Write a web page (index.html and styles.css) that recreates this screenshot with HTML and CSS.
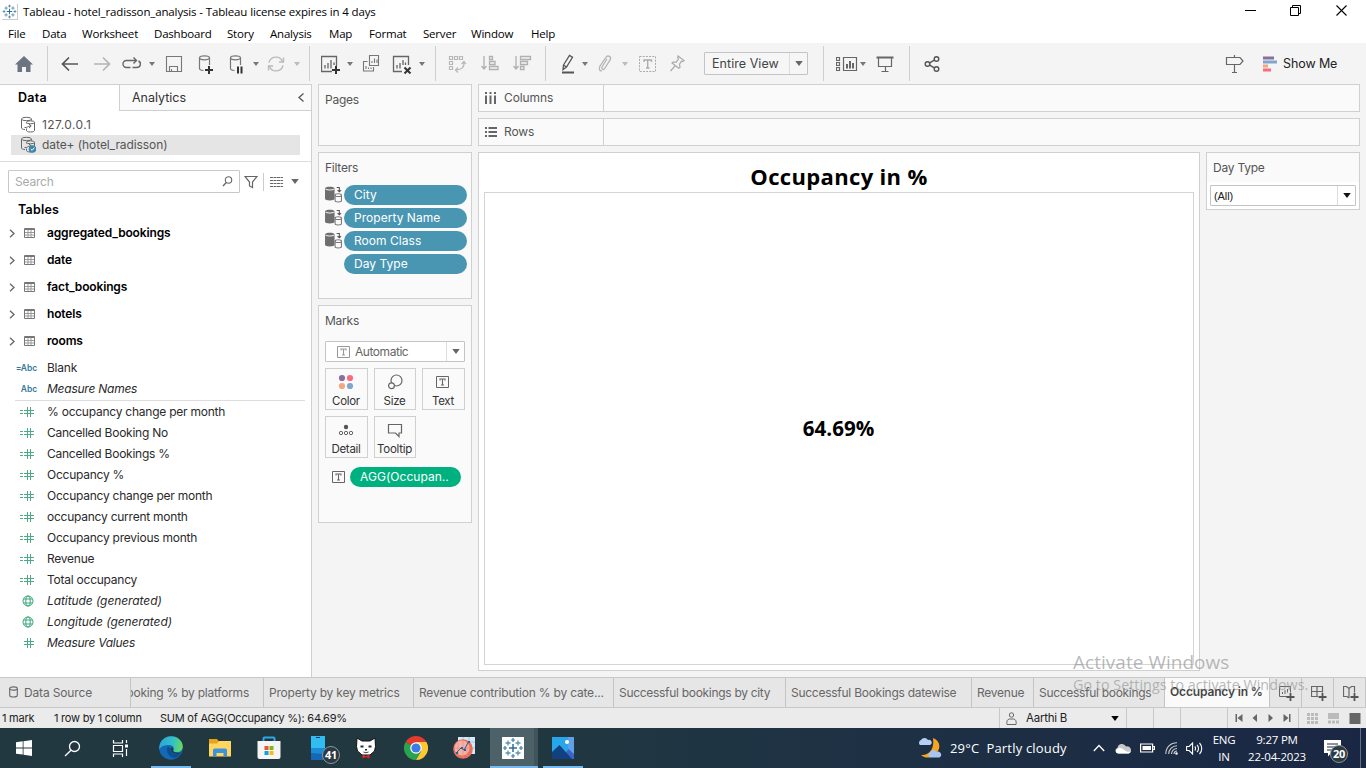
FILE: index.html
```html
<!DOCTYPE html>
<html lang="en">
<head>
<meta charset="utf-8">
<title>Tableau - hotel_radisson_analysis</title>
<link rel="stylesheet" href="styles.css">
</head>
<body>
<svg class="defs" aria-hidden="true">
  <symbol id="caret" viewBox="0 0 6 4"><path d="M0 0h6L3 4z" fill="currentColor"/></symbol>
  <symbol id="logo" viewBox="0 0 22 22"><g fill="none"><path d="M11 7v8M7 11h8" stroke="#2d6f9c" stroke-width="1.500"/><path d="M6 3.500v5M3.500 6h5M16 3.500v5M13.500 6h5M6 13.500v5M3.500 16h5M16 13.500v5M13.500 16h5" stroke="#5b93b3" stroke-width="1.300"/><path d="M11 1v4M9 3h4M11 17v4M9 19h4M3 9v4M1 11h4M19 9v4M17 11h4" stroke="#3c7ea8" stroke-width="1.200"/></g></symbol>
  <symbol id="chev" viewBox="0 0 6 9"><path d="M1 .8l4 3.700-4 3.700" fill="none" stroke="#666" stroke-width="1.300"/></symbol>
  <symbol id="table" viewBox="0 0 11 10"><path d="M.5.500h10v9H.5zM.5 1.500h10" fill="none" stroke="#777"/><path d="M1 4.500h9M1 7h9M4 2v7M7 2v7" fill="none" stroke="#999"/></symbol>
  <symbol id="hash" viewBox="0 0 10 10"><path d="M3.500 0v10M6.500 0v10M0 3.500h10M0 6.500h10" fill="none" stroke="#4bab85"/></symbol>
  <symbol id="ehash" viewBox="0 0 14 10"><path d="M7.500 0v10M10.500 0v10M4 3.500h10M4 6.500h10M0 3.500h3M0 6.500h3" fill="none" stroke="#4bab85"/></symbol>
  <symbol id="globe" viewBox="0 0 12 12"><g fill="none" stroke="#3aa77c"><circle cx="6" cy="6" r="5"/><ellipse cx="6" cy="6" rx="2.200" ry="5"/><path d="M1.500 4h9M1.500 8h9"/></g></symbol>
  <symbol id="db" viewBox="0 0 16 18"><g fill="none" stroke="#666"><path d="M5 13.500C3 13.500 1.500 12.800 1.500 12V3.200M11.500 4.500V3.200"/><ellipse cx="6.500" cy="3" rx="5" ry="1.700"/><path d="M6.500 7.500V6.500M6.500 12.500v2c0 .8 1.500 1.500 4 1.500s4-.7 4-1.500V6.500"/><ellipse cx="10.500" cy="6.300" rx="4" ry="1.500"/><path d="M4.500 11.500c3 .5 3-1.500 6-1.500M9 8l2.200 2L9 12"/></g></symbol>
  <symbol id="ctx" viewBox="0 0 16 17"><path d="M0 2.500C0 1.300 2 .7 4.500.7S9 1.300 9 2.500V12c0 1-2 1.600-4.500 1.600S0 13 0 12z" fill="#6e6e6e"/><path d="M.5 3c1.500 1 6.500 1 8 0" stroke="#eee" fill="none"/><path d="M9.500 9v5c0 1.400 6 1.400 6 0V9" fill="#fafafa" stroke="#777"/><ellipse cx="12.500" cy="8.700" rx="3" ry="1.300" fill="#fff" stroke="#777"/><path d="M11 1.500h2.500V5M11.800 3.800l1.700 1.700 1.700-1.700" fill="none" stroke="#555"/></symbol>
  <symbol id="tbox" viewBox="0 0 14 12"><path d="M.5.5h12v11H.5z" fill="none" stroke="currentColor"/><path d="M4 4.500V3h5v1.500M6.500 3v6M5 9h3" fill="none" stroke="currentColor" stroke-width="1.100"/></symbol>
</svg>

<header class="titlebar">
  <svg class="app-logo" viewBox="0 0 22 22"><use href="#logo"/></svg>
  <span class="title-text">Tableau - hotel_radisson_analysis - Tableau license expires in 4 days</span>
  <div class="winbtns">
    <svg width="11" height="11"><path d="M0 5.500h11" stroke="#000"/></svg>
    <svg width="11" height="11"><path d="M.5 2.500h8v8h-8zM2.500 2.500v-2h8v8h-2" fill="none" stroke="#000"/></svg>
    <svg width="11" height="11"><path d="M.5.5l10 10M10.500.5l-10 10" stroke="#000" stroke-width="1.100"/></svg>
  </div>
</header>
<nav class="menubar"><span class="w37">File</span><span class="w40">Data</span><span class="w72">Worksheet</span><span class="w73">Dashboard</span><span class="w43">Story</span><span class="w59">Analysis</span><span class="w40">Map</span><span class="w54">Format</span><span class="w48">Server</span><span class="w60">Window</span><span>Help</span></nav>

<div class="toolbar">
  <svg class="ic m14" viewBox="0 0 20 20"><path d="M10 2L1 10.500h2.500V18H8v-5h4v5h4.500v-7.500H19z" fill="#6b7480"/></svg>
  <i class="sep m13"></i>
  <svg class="ic m12" viewBox="0 0 20 20"><path d="M2.500 10H18M9 3.500L2.500 10 9 16.500" fill="none" stroke="#555" stroke-width="1.700"/></svg>
  <svg class="ic m12" viewBox="0 0 20 20"><path d="M2 10h15.500M11 3.500l6.500 6.500-6.500 6.500" fill="none" stroke="#b4b4b4" stroke-width="1.700"/></svg>
  <svg class="ic m10" viewBox="0 0 20 20"><path d="M8.500 13.500H4.500a3.500 3.500 0 0 1 0-7H14M10.500 13.500h4c4.500 0 5-5 2-6.500M11.500 3.500l3 3-3 3" fill="none" stroke="#666" stroke-width="1.400"/></svg>
  <svg class="caret m7"><use href="#caret"/></svg>
  <svg class="ic m9" viewBox="0 0 20 20"><path d="M2.500 2.500h15v15h-15zM5.500 17v-4.500h8V17M7.500 15v2" fill="none" stroke="#777" stroke-width="1.100"/></svg>
  <svg class="ic m12" viewBox="0 0 20 20"><g fill="none" stroke="#777" stroke-width="1.200"><ellipse cx="8.500" cy="3.800" rx="5" ry="2"/><path d="M3.500 4v10.500c0 1 2 1.800 4 2M13.500 4v7"/></g><path d="M13 12v8M9 16h8" stroke="#333" stroke-width="2"/></svg>
  <svg class="ic m11" viewBox="0 0 20 20"><g fill="none" stroke="#777" stroke-width="1.200"><ellipse cx="8.500" cy="3.800" rx="5" ry="2"/><path d="M3.500 4v10.500c0 1 2 1.800 4 2M13.500 4v7"/></g><path d="M11 12.500v7M14.500 12.500v7" stroke="#333" stroke-width="2"/></svg>
  <svg class="caret m6"><use href="#caret"/></svg>
  <svg class="ic m7" viewBox="0 0 20 20"><path d="M3 8.500C4.500 2 14 1 16.500 7.500M17 11.500C15.500 18 6 19 3.500 12.500M17.500 3.500v4.500h-4.500M2.500 16.500V12H7" fill="none" stroke="#bbb" stroke-width="1.400"/></svg>
  <svg class="caret m8 off"><use href="#caret"/></svg>
  <i class="sep m9"></i>
  <svg class="ic m11" viewBox="0 0 20 20"><path d="M11 17.500H.5v-15h15V12M4 11v3.500M7 9v5.500M10 6v8.500M13 8.500V11" fill="none" stroke="#666" stroke-width="1.300"/><path d="M15 12v8M11 16h8" stroke="#333" stroke-width="2"/></svg>
  <svg class="caret m6"><use href="#caret"/></svg>
  <svg class="ic m8" viewBox="0 0 20 20"><path d="M8.500 1.500h9v10h-9zM6.500 7.500h-4V17h10v-4M11 9V7M13.500 9V4.500M16 9V5.500M5 15v-3M7.500 15v-1.500M10 15v-1.500" fill="none" stroke="#777" stroke-width="1.100"/></svg>
  <svg class="ic m11" viewBox="0 0 20 20"><path d="M10 17.500H1.500v-15h15V11M5 11v3.500M8 9v5.500M11 6v5M13.500 8.500V11" fill="none" stroke="#666" stroke-width="1.300"/><path d="M12.500 13.500l6 6M18.500 13.500l-6 6" stroke="#333" stroke-width="2"/></svg>
  <svg class="caret m7"><use href="#caret"/></svg>
  <i class="sep m10"></i>
  <svg class="ic m11" viewBox="0 0 20 20"><path d="M2.500 2.500h3v3h-3zM7.500 2.500h3v3h-3zM12.500 2.500h3v3h-3zM2.500 7.500h3v3h-3zM2.500 12.500h3v3h-3zM17 8.500c.5 5-3 7.500-8.500 7.500M14.500 10L17 7.500l2 2.500M11 13.500L8.500 16l2.500 2.500" fill="none" stroke="#b8b8b8" stroke-width="1.200"/></svg>
  <svg class="ic m13" viewBox="0 0 20 20"><path d="M4 2v13M1.500 12L4 15l2.500-3M9.500 2.500h3v3h-3zM9.500 7.500H15v3H9.500zM9.500 12.500h8.500v3H9.500z" fill="none" stroke="#b0b0b0" stroke-width="1.300"/></svg>
  <svg class="ic m12" viewBox="0 0 20 20"><path d="M4 2v13M1.500 12L4 15l2.500-3M8.500 2.500h10v3h-10zM8.500 7.500h7v3h-7zM8.500 12.500H12v3H8.500z" fill="none" stroke="#b0b0b0" stroke-width="1.300"/></svg>
  <i class="sep m13"></i>
  <svg class="ic m12" viewBox="0 0 20 20"><path d="M5.500 11l6-9.500 3 1.800-6 9.700-3.500 2.500zM5.500 11l3 2" fill="none" stroke="#555" stroke-width="1.300"/><path d="M4 18.500h12" stroke="#555" stroke-width="2"/></svg>
  <svg class="caret m4"><use href="#caret"/></svg>
  <svg class="ic m7" viewBox="0 0 20 20"><path d="M12 5l-5 8c-1 2 1.500 3.500 2.700 1.500l5.500-8.800c1.600-3-2.400-5.200-4.200-2.300L5 12c-2 4 .5 5.500 2 4.500" fill="none" stroke="#b4b4b4" stroke-width="1.300"/></svg>
  <svg class="caret m7 off"><use href="#caret"/></svg>
  <svg class="ic m10" viewBox="0 0 20 20"><path d="M1.500 2.500h16v15h-16z" fill="none" stroke="#aaa" stroke-dasharray="2 1.200"/><path d="M6 8V6h7.500v2M9.700 6v8M8 14h3.500" fill="none" stroke="#aaa" stroke-width="1.300"/></svg>
  <svg class="ic m9" viewBox="0 0 20 20"><path d="M11 2l6 4.500-1.200 1-1.300-.3-2 3 .5 3.300-1.200.8L5 9l1-1 3.200.2L11.500 5l-.8-1.500zM8 12l-4.500 5" fill="none" stroke="#aaa" stroke-width="1.200"/></svg>
  <div class="select fit m17"><span>Entire View</span><b><svg class="caret big"><use href="#caret"/></svg></b></div>
  <i class="sep m15"></i>
  <svg class="ic22 m12" viewBox="0 0 22 20"><path d="M7.500 3.500h13v13h-13zM.5 3.500h3v3h-3zM.5 8.500h3v3h-3zM.5 13.500h3v3h-3z" fill="none" stroke="#666" stroke-width="1.200"/><path d="M11 10v4.500M14 7v7.500M17 9v5.500" stroke="#666" stroke-width="2"/></svg>
  <svg class="caret m2"><use href="#caret"/></svg>
  <svg class="ic m9" viewBox="0 0 20 20"><path d="M1.500 3.500h17" stroke="#666" stroke-width="2"/><path d="M3.500 4v8.500h13V4M10.500 12.500v5M6.500 17.500h7" fill="none" stroke="#666" stroke-width="1.200"/></svg>
  <i class="sep m14"></i>
  <svg class="ic m12" viewBox="0 0 20 20"><g fill="none" stroke="#555" stroke-width="1.400"><circle cx="5.500" cy="10" r="2.300"/><circle cx="14.500" cy="5" r="2.300"/><circle cx="14.500" cy="15" r="2.300"/><path d="M7.700 8.800l4.600-2.600M7.700 11.200l4.600 2.600"/></g></svg>
  <svg class="ic guide" viewBox="0 0 20 20"><path d="M2.500 3.500H16l3 3.500-3 3.500H2.500zM10.500 1v2M10.500 10.500v8M8 18.500h5" fill="none" stroke="#666" stroke-width="1.200"/></svg>
  <svg class="showme-ic m18" width="16" height="16"><path d="M1 .5h11v3H1z" fill="#8a6f9a"/><path d="M1 4.500h14v3H1z" fill="#7fa6cc"/><path d="M1 8.500h5v3H1z" fill="#f4a77f"/><path d="M1 12.500h8v3H1z" fill="#fb6a80"/></svg>
  <span class="showme">Show Me</span>
</div>

<main class="workspace">
  <aside class="datapane">
    <div class="ptabs"><span class="ptab on">Data</span><span class="ptab">Analytics</span><svg width="6" height="9" viewBox="0 0 6 9"><path d="M5.500.5L1 4.500l4.500 4" fill="none" stroke="#555" stroke-width="1.300"/></svg></div>
    <div class="sources">
      <div class="src ls1"><svg class="dbi"><use href="#db"/></svg>127.0.0.1</div>
      <div class="src sel"><svg class="dbi" viewBox="0 0 16 18"><use href="#db" width="16" height="18"/><circle cx="12.500" cy="13" r="3.800" fill="#3a86a8"/><path d="M10.700 13l1.400 1.400 2.300-2.800" fill="none" stroke="#fff"/></svg>date+ (hotel_radisson)</div>
    </div>
    <div class="searchrow">
      <div class="search"><span>Search</span><svg width="11" height="11"><circle cx="6.500" cy="4" r="3.200" fill="none" stroke="#666" stroke-width="1.100"/><path d="M4.300 6.500L1 10" stroke="#666" stroke-width="1.300"/></svg></div>
      <svg class="funnel" width="14" height="14"><path d="M1 1.500h12L8.500 7v5.500l-3-1.500V7z" fill="none" stroke="#666" stroke-width="1.200"/></svg>
      <i class="vbar"></i>
      <svg class="lines" width="13" height="10"><path d="M0 .5h13M0 3.500h13M0 6.500h13M0 9.500h13" stroke="#666" stroke-dasharray="3 .5"/></svg>
      <svg class="caret big"><use href="#caret"/></svg>
    </div>
    <h2>Tables</h2>
    <ul class="tables">
      <li><svg class="ch"><use href="#chev"/></svg><svg class="tb"><use href="#table"/></svg>aggregated_bookings</li>
      <li><svg class="ch"><use href="#chev"/></svg><svg class="tb"><use href="#table"/></svg>date</li>
      <li><svg class="ch"><use href="#chev"/></svg><svg class="tb"><use href="#table"/></svg>fact_bookings</li>
      <li><svg class="ch"><use href="#chev"/></svg><svg class="tb"><use href="#table"/></svg>hotels</li>
      <li><svg class="ch"><use href="#chev"/></svg><svg class="tb"><use href="#table"/></svg>rooms</li>
    </ul>
    <ul class="fields dims">
      <li><em class="abc">=Abc</em>Blank</li>
      <li class="it"><em class="abc">Abc</em>Measure Names</li>
    </ul>
    <ul class="fields">
      <li><svg class="eh"><use href="#ehash"/></svg>% occupancy change per month</li>
      <li><svg class="eh"><use href="#ehash"/></svg>Cancelled Booking No</li>
      <li><svg class="eh"><use href="#ehash"/></svg>Cancelled Bookings %</li>
      <li><svg class="eh"><use href="#ehash"/></svg>Occupancy %</li>
      <li><svg class="eh"><use href="#ehash"/></svg>Occupancy change per month</li>
      <li><svg class="eh"><use href="#ehash"/></svg>occupancy current month</li>
      <li><svg class="eh"><use href="#ehash"/></svg>Occupancy previous month</li>
      <li><svg class="eh"><use href="#ehash"/></svg>Revenue</li>
      <li><svg class="eh"><use href="#ehash"/></svg>Total occupancy</li>
      <li class="it gen"><svg class="gl"><use href="#globe"/></svg>Latitude (generated)</li>
      <li class="it gen"><svg class="gl"><use href="#globe"/></svg>Longitude (generated)</li>
      <li class="it"><svg class="ha"><use href="#hash"/></svg>Measure Values</li>
    </ul>
  </aside>

  <section class="cards">
    <div class="card pages"><h3>Pages</h3></div>
    <div class="card filters"><h3>Filters</h3>
      <div class="frow"><svg class="cx"><use href="#ctx"/></svg><span class="pill">City</span></div>
      <div class="frow"><svg class="cx"><use href="#ctx"/></svg><span class="pill">Property Name</span></div>
      <div class="frow"><svg class="cx"><use href="#ctx"/></svg><span class="pill">Room Class</span></div>
      <div class="frow"><i class="cx"></i><span class="pill">Day Type</span></div>
    </div>
    <div class="card marks"><h3>Marks</h3>
      <div class="select mtype"><svg class="tbx lite"><use href="#tbox"/></svg><span>Automatic</span><b><svg class="caret big"><use href="#caret"/></svg></b></div>
      <div class="mgrid">
        <div class="mb"><svg width="16" height="16"><circle cx="4" cy="4" r="3.100" fill="#8a6f9a"/><circle cx="12" cy="4" r="3.100" fill="#fb6a80"/><circle cx="4" cy="12" r="3.100" fill="#f4a77f"/><circle cx="12" cy="12" r="3.100" fill="#7fa6cc"/></svg>Color</div>
        <div class="mb"><svg width="16" height="16"><circle cx="9.500" cy="6.500" r="5.500" fill="none" stroke="#666" stroke-width="1.200"/><circle cx="4.500" cy="11.800" r="2.900" fill="#fafafa" stroke="#666" stroke-width="1.200"/></svg>Size</div>
        <div class="mb"><svg width="14" height="16" viewBox="0 0 14 16" class="tcol"><use href="#tbox" y="2" width="14" height="12"/></svg>Text</div>
        <div class="mb"><svg width="16" height="16"><circle cx="8" cy="5" r="2.200" fill="#555"/><g fill="none" stroke="#666"><circle cx="3" cy="11" r="1.700"/><circle cx="8" cy="11" r="1.700"/><circle cx="13" cy="11" r="1.700"/></g></svg>Detail</div>
        <div class="mb"><svg width="16" height="16"><path d="M1.500 2.500h13v8.500H12v3.500L8.500 11h-7z" fill="none" stroke="#666" stroke-width="1.200"/></svg>Tooltip</div>
      </div>
      <div class="mpill"><svg class="tbx"><use href="#tbox"/></svg><span class="pill green">AGG(Occupan..</span></div>
    </div>
  </section>

  <section class="right">
    <div class="shelf"><div><svg width="12" height="13"><path d="M1 3.500V12M5.500 3.500V12M10 3.500V12M1 0v2M5.500 0v2M10 0v2" stroke="#666" stroke-width="2"/></svg>Columns</div></div>
    <div class="shelf"><div><svg width="12" height="13"><path d="M3.500 2H12M3.500 6H12M3.500 10H12M0 2h2M0 6h2M0 10h2" stroke="#666" stroke-width="2"/></svg>Rows</div></div>
    <div class="viewrow">
      <div class="view"><h1>Occupancy in %</h1><div class="viz"><span>64.69%</span></div></div>
      <div class="qfilter"><h3>Day Type</h3><div class="select qsel"><span>(All)</span><b><svg class="caret big"><use href="#caret"/></svg></b></div></div>
    </div>
  </section>
</main>

<nav class="sheets">
  <div class="ds"><svg width="9" height="12"><path d="M.7 2.500v7c0 2 7.600 2 7.600 0v-7" fill="none" stroke="#666" stroke-width="1.100"/><ellipse cx="4.500" cy="2.500" rx="3.800" ry="1.600" fill="none" stroke="#666" stroke-width="1.100"/></svg>Data Source</div>
  <div class="s1 clip"><span>Booking % by platforms</span></div>
  <div class="s2">Property by key metrics</div>
  <div class="s3">Revenue contribution % by cate...</div>
  <div class="s4">Successful bookings by city</div>
  <div class="s5">Successful Bookings datewise</div>
  <div class="s6">Revenue</div>
  <div class="s7">Successful bookings</div>
  <div class="s8 on">Occupancy in %</div>
  <div class="new"><svg width="16" height="16"><path d="M8 11.500H.500V1.500h11v6M3.500 9V7M6 9V5M8.500 7.500V4" fill="none" stroke="#666"/><path d="M11.500 8v8M7.500 12h8" stroke="#555" stroke-width="1.800"/></svg></div>
  <div class="new"><svg width="16" height="16"><path d="M7 11.500H.500V1.500h11v6M.5 6.500h11M6 1.500v10" fill="none" stroke="#666" stroke-width="1.200"/><path d="M11.500 8v8M7.500 12h8" stroke="#555" stroke-width="1.800"/></svg></div>
  <div class="new"><svg width="16" height="16"><path d="M6 13l-2-1.500H.5v-10h3L6 3.500l2.500-2h3v6M6 3.500V13" fill="none" stroke="#666" stroke-width="1.200"/><path d="M11.500 8v8M7.500 12h8" stroke="#555" stroke-width="1.800"/></svg></div>
</nav>
<footer class="status">
  <span class="a">1 mark</span><span class="b">1 row by 1 column</span><span class="c">SUM of AGG(Occupancy %): 64.69%</span>
  <div class="user"><svg width="11" height="13"><circle cx="5.500" cy="3" r="2.200" fill="none" stroke="#666"/><path d="M1 12.500c-.8-3 .5-5.500 2.500-5.500h4c2 0 3.300 2.500 2.500 5.500z" fill="none" stroke="#666"/></svg><span>Aarthi B</span><svg class="caret big"><use href="#caret"/></svg></div>
  <i class="c27"></i><i class="c27"></i><i class="c47"></i>
  <div class="pager"><svg width="56" height="8"><path d="M.5 0h1.500v8H.5zM7.500 0v8L2.500 4zM22 0v8L17.500 4zM33.500 0v8L38 4zM48.500 0v8L53.500 4zM54 0h1.500v8H54z" fill="#666"/></svg></div>
  <div class="modes"><svg width="54" height="11"><path d="M0 1.500h11M0 5.500h11M0 9.500h11" stroke="#bbb" stroke-width="3" stroke-dasharray="3 1"/><path d="M21 0h11v6H21z" fill="#bbb"/><path d="M21 9h11" stroke="#bbb" stroke-width="3" stroke-dasharray="3 1"/><path d="M42.500 0h11v11h-11z" fill="#666"/></svg></div>
</footer>

<div class="taskbar">
  <div class="tk"><svg width="16" height="16"><path d="M0 2.300L6.700 1.300v6.200H0zM7.500 1.200L16 0v7.500H7.500zM0 8.400h6.700v6.200L0 13.700zM7.500 8.400H16V16l-8.500-1.200z" fill="#fff"/></svg></div>
  <div class="tk"><svg width="17" height="17"><circle cx="10.500" cy="6.500" r="5" fill="none" stroke="#fff" stroke-width="1.300"/><path d="M7 10.200L1 16" stroke="#fff" stroke-width="1.300"/></svg></div>
  <div class="tk"><svg width="17" height="17"><path d="M1.500 0v3h9V0M1.500 5.500h9v6h-9zM1.500 17v-3h9v3M14.500 0v3M14.500 9v7" fill="none" stroke="#fff" stroke-width="1.200"/><path d="M13 4.500h3v3h-3z" fill="#fff"/></svg></div>
  <div class="tk run first"><svg width="24" height="24" viewBox="0 0 24 24"><defs><linearGradient id="eg" x1="0" x2="1" y1=".3" y2=".4"><stop offset="0" stop-color="#2aa5dc"/><stop offset=".6" stop-color="#35c1c4"/><stop offset="1" stop-color="#69d957"/></linearGradient></defs><circle cx="12" cy="12" r="11.800" fill="#1269b5"/><path d="M.3 11C1 4.500 6 .2 12 .2c7 0 11.800 5 11.800 10 0 4-3 6-6 6-2.500 0-4-1-3.500-2 1.500-2-.3-5.200-4-5.200C6 9 2 9.500.3 14z" fill="url(#eg)"/><path d="M8.500 11c-2 5 1.500 10.500 7 11 3-.5 5.500-2.500 6.800-5-6 2.500-10.300.500-10-3-.3-1.500-2-3.500-3.800-3z" fill="#0d4f93"/><path d="M12.500 11c1.800.7 2.300 2 1.500 3.500.5 1.300 2 2.300 5 2.300 2 0 3-.2 3.800-.8-3 3.500-10.500 2-10.700-2.500z" fill="#213a44"/></svg></div>
  <div class="tk"><svg width="22" height="18"><path d="M0 0h8l1.500 2H22v15H0z" fill="#e8a317"/><path d="M0 4.500h8L10 2h12v15.500H0z" fill="#ffd661"/><path d="M4 17.500V11a1.500 1.500 0 0 1 1.500-1.500h11A1.500 1.500 0 0 1 18 11v6.500h-3.500V14h-7v3.500z" fill="#3c93dc"/></svg></div>
  <div class="tk"><svg width="24" height="24"><path d="M6.500 6V2.500q0-1 1-1h9q1 0 1 1V6" fill="none" stroke="#2ba8e8" stroke-width="2"/><path d="M.5 5h23v16q0 2-2 2h-19q-2 0-2-2z" fill="#f4f4f4"/><path d="M7.500 10h4v4h-4z" fill="#f0502c"/><path d="M12.500 10h4v4h-4z" fill="#7db817"/><path d="M7.500 15h4v4h-4z" fill="#0aa0e8"/><path d="M12.500 15h4v4h-4z" fill="#fdb813"/></svg></div>
  <div class="tk phone"><svg width="14" height="24"><path d="M0 0h14v24H0z" fill="#1568b4"/><path d="M0 0h14v18l-14-1z" fill="#1a8bd6"/><path d="M0 0h14v12H0z" fill="#31bdf0"/><path d="M5 1.500h4" stroke="#136"/></svg><span class="badge">41</span></div>
  <div class="tk cat"><svg width="20" height="22"><path d="M1 1l5 3h8l5-3 .5 8.500-1 4.500-4.500 4H6l-4.500-4-1-4.500z" fill="#fff" stroke="#111"/><path d="M4.500 9.500h3M12.500 9.500h3" stroke="#16324a" stroke-width="2"/><path d="M9 12h2v1.500H9z" fill="#222"/><path d="M7.500 15q2.500 1.500 5 0" stroke="#444" fill="none"/><path d="M6.500 17.500l3.500 1.500 3.500-1.500v4l-3.500-1.500-3.500 1.500z" fill="#e8202a"/></svg></div>
  <div class="tk"><svg width="24" height="24" viewBox="0 0 24 24"><path d="M12 12L1.600 6A12 12 0 0 1 22.400 6z" fill="#e33b2e"/><path d="M12 12L1.600 6A12 12 0 0 0 12 24l5-9z" fill="#2ba24c"/><path d="M12 6h10.400A12 12 0 0 1 12 24l5.200-9z" fill="#fcc934"/><circle cx="12" cy="12" r="5.800" fill="#fff"/><circle cx="12" cy="12" r="4.600" fill="#3a7de8"/></svg></div>
  <div class="tk rp"><svg width="24" height="24"><path d="M6 1h17v17H6z" fill="#d6e8f4"/><path d="M11 1v17M17 1v17M6 6h17M6 12h17" stroke="#a5c4dc"/><circle cx="11" cy="13" r="9.800" fill="#e9705d"/><circle cx="10" cy="12" r="7.500" fill="#f5b3a8"/><path d="M3 12h15M6 7v12M11 5v16M15 6v14" stroke="#ea8f82" stroke-width=".8"/><path d="M4 17l5-5 3 2 5-9" fill="none" stroke="#2b5f97"/><path d="M4 16h2v2H4zM9 11h2v2H9zM12 13h2v2h-2zM16 5h2v2h-2z" fill="#2b5f97"/></svg></div>
  <div class="tk active"><svg width="22" height="22"><path d="M0 0h22v22H0z" fill="#fff"/><use href="#logo" width="22" height="22"/></svg></div>
  <div class="tk run photos"><svg width="22" height="22"><path d="M0 0h22v22H0z" fill="#27a7ea"/><path d="M16 0h6v22h-6z" fill="#5fa0e8"/><path d="M9 22l7.500-10L22 17v5z" fill="#3a64c8"/><path d="M0 15l7.500-7L20 22H0z" fill="#12417f"/><circle cx="15" cy="5" r="2" fill="#fff"/></svg></div>

  <svg class="moon" width="25" height="24"><path d="M16 2c6 2 8 8 5 13-3 6-11 9-17 4 6 1 14-4 12-17z" fill="#f5a623"/><path d="M3 9a3 3 0 0 1 1-5 4 4 0 0 1 7 0 2.600 2.600 0 0 1 2 5z" fill="#b9d0f5"/><path d="M13 21.500a2.700 2.700 0 0 1 0-5 3.500 3.500 0 0 1 6.500-.5 2.800 2.800 0 0 1 3 5.500z" fill="#a9c4f2"/></svg>
  <span class="wx">29°C&nbsp; Partly cloudy</span>
  <svg class="up" width="12" height="8"><path d="M.8 7L6 1.500 11.200 7" fill="none" stroke="#fff" stroke-width="1.300"/></svg>
  <svg class="cloud" width="16" height="11"><path d="M3 10.500A2.800 2.800 0 0 1 2.500 5 4.500 4.500 0 0 1 11 3.500a3.500 3.500 0 0 1 2.500 7z" fill="#c8c8c8"/><path d="M3 10.500a2.800 2.800 0 0 1 .5-5.500c3-1 5 2 8 3.500 2 .5 4 0 4 0-.2 1.200-1 2-2 2z" fill="#fff"/></svg>
  <svg class="bat" width="15" height="10"><path d="M.6 1h12v8H.6zM13.200 3.500h1.200v3h-1.200" fill="none" stroke="#fff" stroke-width="1.200"/><path d="M2.500 3h8.500v4H2.500z" fill="#fff"/></svg>
  <svg class="wifi" width="13" height="13"><g fill="none" stroke="#ccc" stroke-width="1.100"><path d="M.8 12C.8 5.500 5.500.8 12 .8M3.700 12c0-4.500 3.800-8.300 8.300-8.300M6.500 12c0-3 2.500-5.500 5.500-5.500M9 12c0-1.700 1.300-3 3-3"/></g><circle cx="11.500" cy="11.500" r="1.200" fill="#fff"/></svg>
  <svg class="vol" width="17" height="13"><path d="M.6 4.500h2.500L6.600 1v11L3.100 8.500H.6zM8.800 4.500c1 1 1 3 0 4M11 2.800c2 2 2 5.400 0 7.400M13.500 1c3 3.200 3 7.800 0 11" fill="none" stroke="#fff" stroke-width="1.100"/></svg>
  <div class="two lang"><span>ENG</span><span>IN</span></div>
  <div class="two clock"><span>9:27 PM</span><span>22-04-2023</span></div>
  <div class="notif"><svg width="17" height="17"><path d="M0 0h17v13H7l-3 3.500V13H0z" fill="#fff"/><path d="M3 4h11M3 7h11M3 10h7" stroke="#1c2b40" stroke-width="1.100"/></svg><span class="badge">20</span></div>
  <i class="desk"></i>
</div>

<div class="watermark"><p class="w1">Activate Windows</p><p class="w2">Go to Settings to activate Windows.</p></div>
</body>
</html>
```
FILE: styles.css
```css
*{box-sizing:border-box}
body{margin:0;width:1366px;height:768px;overflow:hidden;position:relative;display:flex;flex-direction:column;background:#fff;color:#222;font:400 12px/16px Inter,"Liberation Sans",sans-serif;letter-spacing:-.24px;white-space:nowrap}
h1,h2,h3,p,ul{margin:0;padding:0;font-weight:400}
ul{list-style:none}
svg{flex:none;display:block}
.defs{position:absolute;width:0;height:0}

.titlebar{height:24px;display:flex;align-items:center;font:11.5px/16px "Open Sans",sans-serif;letter-spacing:-.14px;color:#000}
.app-logo{width:16px;height:16px;margin:0 5px 0 2px;border-right:1px solid #ccc;border-bottom:1px solid #ccc}
.title-text{flex:1}
.winbtns{display:flex;gap:34px;padding:0 19px 3px 0}
.winbtns svg:last-child{margin-left:1px}
.menubar{height:19px;padding:2px 0 0 8px;display:flex;font:11.5px/16px "Open Sans",sans-serif;letter-spacing:-.2px;color:#000}
.w37{width:34px}.w40{width:40px}.w72{width:72px}.w73{width:73px}.w43{width:43px}.w59{width:59px}.w54{width:54px}.w48{width:48px}.w60{width:60px}

.toolbar{height:41px;background:#f4f4f4;display:flex;align-items:center}
.ic{width:20px;height:20px}
.ic22{width:22px;height:20px}
.caret{width:6px;height:4px;color:#777}
.caret.big{width:8px;height:5px;color:#666}
.caret.off{color:#bbb}
.sep{width:1px;height:35px;background:#cfcfcf;flex:none}
.m2{margin-left:2px}.m4{margin-left:4px}.m6{margin-left:6px}.m7{margin-left:7px}.m8{margin-left:8px}.m9{margin-left:9px}.m10{margin-left:10px}.m11{margin-left:11px}.m12{margin-left:12px}.m13{margin-left:13px}.m14{margin-left:14px}.m15{margin-left:15px}.m17{margin-left:17px}.m18{margin-left:18px}
.guide{margin-left:282px}
.showme{margin-left:5px;font-size:12.5px;letter-spacing:-.1px}
.select{display:flex;align-items:center;border:1px solid #c4c4c4;border-radius:1px;background:#fff;flex:none}
.select span{flex:1}
.select b{align-self:stretch;display:flex;align-items:center;justify-content:center;border-left:1px solid #ddd;width:18px}
.fit{width:104px;height:23px;background:#f6f6f6;padding-left:7px;font-size:12.5px;letter-spacing:.05px;color:#444}

.workspace{height:593px;display:flex;background:#f4f4f4}
.datapane{width:312px;background:#fff;border-right:1px solid #d0d0d0;border-top:1px solid #d0d0d0;flex:none}
.ptabs{height:26px;display:flex;align-items:center}
.ptab{font-size:12.5px;letter-spacing:-.02px;color:#333}
.ptab.on{width:119px;padding-left:18px;font-weight:600;color:#000;letter-spacing:.3px}
.ptab:nth-child(2){flex:1;height:26px;line-height:25px;padding-left:12px;background:#fafafa;border-left:1px solid #d0d0d0;border-bottom:1px solid #d0d0d0}
.ptabs svg{box-sizing:content-box;height:25px;width:6px;padding:0 7px;background:#fafafa;border-bottom:1px solid #d0d0d0}
.sources{height:51px;padding:4px 11px 0;border-bottom:1px solid #ddd}
.src{height:20px;display:flex;align-items:center;padding-left:9px;color:#555;letter-spacing:-.08px}
.src.ls1{letter-spacing:.4px}
.src.sel{background:#e5e5e5}
.dbi{width:16px;height:18px;margin-right:6px}
.searchrow{display:flex;align-items:center;padding:8px 0 0 8px}
.search{width:232px;height:23px;border:1px solid #c8c8c8;border-radius:1px;display:flex;align-items:center;justify-content:space-between;padding:0 6px;color:#aaa}
.search span{letter-spacing:-.2px}
.funnel{margin-left:4px}
.vbar{width:1px;height:18px;background:#ccc;margin:0 6px 0 5px}
.lines{margin-right:8px}
h2{font-size:12.5px;font-weight:600;color:#000;padding-left:18px;margin-top:8px;line-height:18px;letter-spacing:.2px}
.tables li{height:27px;display:flex;align-items:center;font-weight:600;color:#000;padding-left:9px;letter-spacing:-.15px}
.ch{width:6px;height:9px;margin-top:1px}
.tb{width:11px;height:10px;margin:1px 12px 0 9px}
.fields{color:#2a2a2a}
.fields li{height:21px;display:flex;align-items:center}
.dims{margin:2px 6px 0 15px;padding-top:1px;height:45px;border-bottom:1px solid #ddd}
.dims li{margin-left:-15px}
.it{font-style:italic}
.fields .gen{letter-spacing:-.08px}
.abc{width:37px;margin-right:10px;text-align:right;font-style:normal;font-weight:600;font-size:8.500px;color:#3a7a99;letter-spacing:-.1px}
.eh{width:14px;height:10px;margin:0 13px 0 20px}
.gl{width:12px;height:12px;margin:0 13px 0 22px}
.ha{width:10px;height:10px;margin:0 13px 0 24px}

.cards{width:154px;margin-left:6px;display:flex;flex-direction:column;gap:6px;flex:none}
.card{border:1px solid #d0d0d0;background:#fafafa;padding:0 6px}
h3{font-size:12px;line-height:30px;color:#555}
.pages{height:62px}
.filters{height:147px}
.marks{height:218px}
.frow{display:flex;align-items:center;height:23px;width:142px}
.cx{width:17px;height:18px;margin-right:2px;flex:none}
.pill{height:20px;border-radius:10px;background:#4996b2;color:#fff;line-height:19px;padding-left:10px;width:123px;letter-spacing:.04px}
.mtype{width:140px;height:21px;margin-top:5px;color:#666;padding-left:11px;letter-spacing:-.45px}
.tbx{width:14px;height:12px;color:#666}
.tcol{color:#666}
.lite{color:#999;margin-right:4px}
.mgrid{display:grid;grid-template-columns:43px 42px 43px;gap:6px;margin-top:6px}
.mb{height:42px;border:1px solid #d0d0d0;display:flex;flex-direction:column;align-items:center;padding:5px 1px 0 0;font-size:11.5px;letter-spacing:-.3px;color:#333;gap:3px}
.mpill{display:flex;align-items:center;gap:4px;margin:9px 0 0 7px}
.green{background:#00b180;width:111px}

.right{flex:1;padding:0 6px 6px;display:flex;flex-direction:column;gap:6px}
.shelf{height:28px;border:1px solid #d0d0d0;background:#fafafa}
.shelf div{width:125px;height:26px;border-right:1px solid #d0d0d0;display:flex;align-items:center;gap:7px;padding-left:6px;color:#555;letter-spacing:-.1px}
.viewrow{flex:1;display:flex;align-items:flex-start;gap:6px}
.view{width:722px;height:519px;border:1px solid #d0d0d0;background:#fff;padding:8px 5px 5px}
h1{font:700 22px/30px "Open Sans",sans-serif;letter-spacing:.34px;text-align:center;color:#000}
.view h1{height:31px}
.viz{height:473px;border:1px solid #d4d4d4;display:flex;align-items:center;justify-content:center;font:700 20.600px/24px "Open Sans",sans-serif;letter-spacing:0;color:#000;padding:0 1px 2px 0}
.qfilter{flex:1;height:58px;border:1px solid #d0d0d0;background:linear-gradient(#fafafa 29px,#fff 29px)}
.qfilter h3{padding-left:6px}
.qsel{margin:2px 3px 0;height:21px;padding-left:3px;font:11px/16px "Liberation Sans",sans-serif;color:#222;letter-spacing:-.1px}
.qsel .caret.big{color:#111}

.sheets{height:31px;display:flex;background:#e6e6e6;border-top:1px solid #c8c8c8;border-bottom:1px solid #c8c8c8;color:#666;line-height:29px}
.sheets div{border-right:1px solid #c4c4c4;padding-left:5px;flex:none;overflow:hidden}
.sheets .ds{width:131px;display:flex;align-items:center;gap:6px;padding-left:9px;letter-spacing:-.15px}
.ds svg{margin-top:-2px}
.s1{width:133px}.s2{width:150px}.s3{width:200px}.s4{width:172px}.s5{width:186px}.s6{width:62px}.s7{width:131px}.s8{width:105px}
.sheets .clip{display:flex;justify-content:flex-end;padding:0 14px 0 0;overflow:clip}
.clip span{margin-left:-30px}
.sheets .s2,.sheets .s3{letter-spacing:-.2px}
.sheets .s4,.sheets .s7{letter-spacing:-.3px}
.sheets .s5{letter-spacing:-.26px}
.sheets .on{background:#fafafa;color:#444;font-weight:600;letter-spacing:-.15px;line-height:27px}
.sheets .new{width:32px;display:flex;align-items:center;padding:0 0 0 9px}

.status{height:20px;display:flex;align-items:stretch;background:#ebebeb;font-size:11px;line-height:20px;color:#222;letter-spacing:-.23px}
.a{width:54px;padding-left:2px}.b{width:106px}.c{width:839px}
.user{width:127px;display:flex;align-items:center;border-left:1px solid #c8c8c8;padding-left:6px;font-size:11.5px}
.user span{margin-left:9px;width:85px}
.user .caret.big{color:#000}
.status i,.pager,.modes{border-left:1px solid #c8c8c8;display:flex;align-items:center}
.c27{width:27px}.c47{width:47px}
.pager{width:71px;padding-left:7px}
.modes{padding-left:8px}

.taskbar{height:40px;display:flex;align-items:center;background:linear-gradient(90deg,#213840 0,#213840 38%,#1e3244 60%,#1a2744 100%);color:#fff;font:13px/16px "Open Sans",sans-serif;letter-spacing:.18px}
.tk{width:48px;height:40px;display:flex;align-items:center;justify-content:center;position:relative;flex:none}
.tk.first{margin-left:3px}
.first~.tk{margin-left:1px}
.run::after,.active::after{content:"";position:absolute;left:4px;right:4px;bottom:0;height:2px;background:#76b9ed}
.active::after{left:0;right:0}
.active{background:#4d6168;box-shadow:inset -4px 0 #42545b}
.active svg{margin-right:2px}
.cat svg,.rp svg{margin-right:2px}
.badge{position:absolute;width:18px;height:18px;border-radius:9px;background:#2c3a42;border:1px solid #8b959b;font:700 11px/16px "Open Sans",sans-serif;letter-spacing:-.3px;text-align:center;color:#fff}
.phone .badge{left:28px;top:18px}
.moon{margin-left:330px}
.wx{margin-left:8px;width:143px}
.cloud{margin-left:10px}.bat{margin-left:9px}.wifi{margin-left:10px}.vol{margin-left:8px}
.two{display:flex;flex-direction:column;align-items:center;font-size:11.5px;line-height:17px;letter-spacing:-.22px}
.lang{width:30px;margin-left:6px}
.clock{width:62px;margin-left:7px}
.notif{position:relative;margin-left:16px}
.notif .badge{left:6px;top:5px}
.desk{width:1px;height:40px;background:#66707f;margin-left:19px}

.watermark{position:absolute;left:1073px;top:651px;color:rgba(150,150,150,.68);font-family:"Open Sans",sans-serif;letter-spacing:.03px;pointer-events:none}
.w1{font-size:19px;line-height:23px}
.w2{font-size:14.300px;line-height:22px}
```
